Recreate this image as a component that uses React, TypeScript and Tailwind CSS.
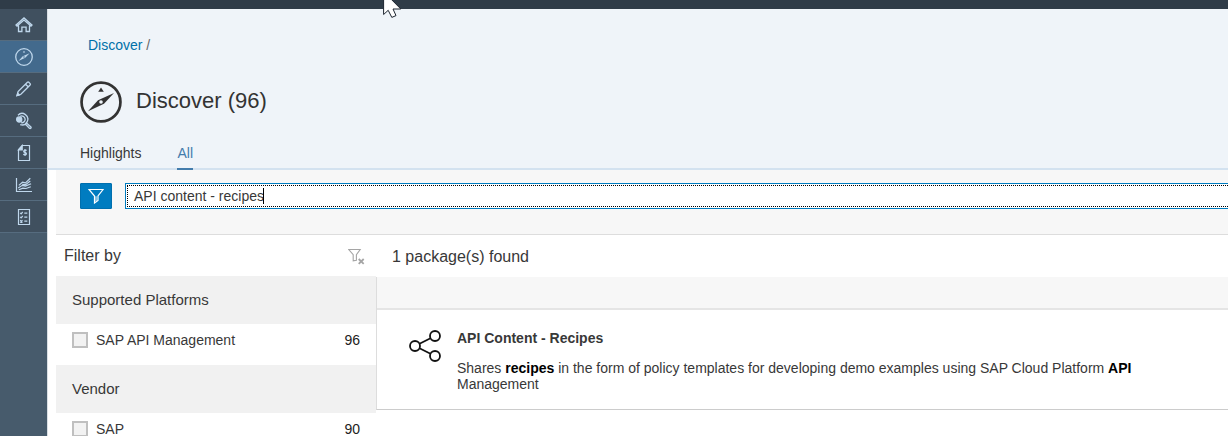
import type { ReactNode } from 'react';

function Compass({ size, stroke, hub }: { size: number; stroke: number; hub: string }) {
  return (
    <svg width={size} height={size} viewBox="0 0 42 42" fill="none" stroke="currentColor" className="shrink-0">
      <circle cx="21" cy="21" r={20.8 - stroke / 2} strokeWidth={stroke} />
      <path d="M34 12 24 22.8 8 30.2 18 19.3Z" fill="currentColor" stroke="none" />
      <path d="M21 6.5 23.8 10.7H18.2Z" fill="currentColor" stroke="none" />
      <circle cx="21" cy="21" r="1.8" fill={hub} stroke="none" />
    </svg>
  );
}

function Glyph({ children }: { children: ReactNode }) {
  return (
    <svg width="18" height="18" viewBox="0 0 18 18" fill="none" stroke="currentColor" strokeWidth="1.2">
      {children}
    </svg>
  );
}

const navItems: { name: string; icon: ReactNode; active?: boolean }[] = [
  {
    name: 'Home',
    icon: (
      <Glyph>
        <path d="M1 9 9 1.9 17 9l-1 1.1L9 4.1 2 10.1zM3.5 9.5v6h3.4v-4.3h4.2v4.3h3.4v-6" strokeWidth="1.3" />
      </Glyph>
    ),
  },
  { name: 'Discover', icon: <Compass size={18} stroke={3} hub="#436a8d" />, active: true },
  {
    name: 'Design',
    icon: (
      <Glyph>
        <path d="m2 15.6 1.1-4.1 9.3-9.2q.7-.6 1.4 0l1.3 1.3q.7.7 0 1.4l-9.2 9.3zM10.6 4.2l2.8 2.8" strokeWidth="1.3" />
        <path d="m2 15.6.7-2.4 1.7 1.7z" fill="currentColor" />
      </Glyph>
    ),
  },
  {
    name: 'Monitor',
    icon: (
      <Glyph>
        <circle cx="4.2" cy="7.5" r="2.6" fill="currentColor" />
        <path d="M3 3.2A5.7 5.7 0 1 1 5.2 12.6M5.2 4.3a3.4 3.4 0 1 1 1 6.4M11.5 11l4.4 3.9q.5.7-.1 1.3-.7.6-1.4 0L10.3 12" strokeWidth="1.3" />
      </Glyph>
    ),
  },
  {
    name: 'Billing',
    icon: (
      <Glyph>
        <path d="M7.2 1.5h7.3v15h-11V5.8z" />
        <path d="M7.2 1.5v4.3H3.5z" fill="currentColor" />
        <path d="M11.7 6.4c-3-1.2-4 1.4-1.9 2 2.7.6 1.9 3.3-1.6 2M10 5v7" />
      </Glyph>
    ),
  },
  {
    name: 'Analytics',
    icon: (
      <Glyph>
        <path d="M1.5 2v13.5H17M3.2 12.1l4.1-2.8 3.2.8 5.6-2.3M3.8 9.4l3.7-3.2 3 .7 4.8-4.6M3.8 13.8l4.1-1.6 3.1.3 4.8-1.7M7.4 8.4l3.2.3 4.7-3.7" />
      </Glyph>
    ),
  },
  {
    name: 'Tasks',
    icon: (
      <Glyph>
        <path d="M3.5 1.5h11v15h-11zM9.3 5.2h3M9.3 9.2h3M9.3 13.2h3M5.2 4.9l.9.9L7.7 4M5.2 8.9l.9.9 1.6-1.8M5.2 12.2l2.3 2.3M7.5 12.2l-2.3 2.3" />
      </Glyph>
    ),
  },
];

function Sidebar() {
  return (
    <nav className="flex w-12 shrink-0 flex-col border-r border-[#d9dfe4] bg-[#475b6c] text-[#bfd7ec]">
      {navItems.map((item) => (
        <a
          key={item.name}
          aria-label={item.name}
          className={
            item.active
              ? 'flex h-8 shrink-0 items-center justify-center border-b border-[#566c7f] bg-[#436a8d] pl-px'
              : 'flex h-8 shrink-0 items-center justify-center border-b border-[#566c7f] bg-[#40505f] pl-px'
          }
        >
          {item.icon}
        </a>
      ))}
    </nav>
  );
}

function FilterGroup({ title, label, count }: { title: string; label: string; count: number }) {
  return (
    <section>
      <h3 className="flex h-12 items-center bg-[#f1f1f1] px-4 text-[15px]">{title}</h3>
      <div className="flex h-[41px] items-start px-4 pt-2 text-sm leading-4">
        <span className="mr-2 size-4 border-2 border-[#bfbfbf] bg-[#f2f2f2]" />
        <span>{label}</span>
        <span className="ml-auto text-[#222]">{count}</span>
      </div>
    </section>
  );
}

export default function App() {
  return (
    <div className="flex h-[436px] w-[1228px] flex-col overflow-hidden bg-white font-['Liberation_Sans',Arial,sans-serif] text-[#383838]">
      <div className="h-[9px] shrink-0 bg-[#2f3c48]" />
      <div className="flex min-h-0 flex-1">
        <Sidebar />
        <main className="flex min-w-0 flex-1 flex-col">
          <header className="flex h-[161px] shrink-0 flex-col border-b-2 border-[#d3e2f0] bg-[#eff4f9] pl-8">
            <div className="mt-7 ml-2 text-sm leading-4 text-[#666]">
              <a className="text-[#0070a8]">Discover</a> /
            </div>
            <div className="mt-7 flex h-[42px] items-center text-[#333]">
              <Compass size={42} stroke={2.7} hub="#eff4f9" />
              <h1 className="-mt-0.5 ml-3.5 text-[22px] leading-6">Discover (96)</h1>
            </div>
            <div className="mt-auto -mb-0.5 flex gap-9 text-sm leading-4">
              <span className="h-[25px]">Highlights</span>
              <span className="h-[25px] border-b-2 border-[#427cac] text-[#427cac]">All</span>
            </div>
          </header>
          <div className="ml-2 flex h-[65px] shrink-0 items-start border-b border-[#ddd] bg-[#f7f7f7] pt-[13px] pl-6">
            <button aria-label="Filter" className="flex h-[26px] w-8 shrink-0 items-center justify-center rounded-[1px] border border-[#006fae] bg-[#007cc0] text-white">
              <svg width="16" height="16" viewBox="0 0 16 16" fill="none" stroke="currentColor" strokeWidth="1.2">
                <path d="M1 1.5h14L10 8v4.5L6.5 15V8z" />
                <path d="M8 8.3v5" strokeWidth="1.7" opacity=".6" />
              </svg>
            </button>
            <div className="ml-[13px] flex h-[26px] flex-1 border border-r-0 border-[#007cc0] bg-white pt-px pl-px">
              <div className="flex h-[22px] flex-1 items-center border border-r-0 border-dotted border-black pl-1.5 text-sm leading-4">
                API content - recipes
                <span className="-ml-px h-4 w-px bg-black" />
              </div>
            </div>
          </div>
          <div className="ml-2 flex min-h-0 flex-1">
            <aside className="w-80 shrink-0">
              <div className="flex h-[41px] items-center justify-between pr-[11px] pl-2 text-base">
                <h2>Filter by</h2>
                <svg width="17" height="17" viewBox="0 0 17 17" fill="none" stroke="#a5a5a5" strokeWidth="1.1" className="mt-0.5">
                  <path d="M.8 1.5h11.4L8.4 6.7v5.5L5.2 12.8V6.7z" />
                  <path d="m10.7 11 5 4.8m0-4.8-5 4.8" strokeWidth="1.8" />
                </svg>
              </div>
              <FilterGroup title="Supported Platforms" label="SAP API Management" count={96} />
              <FilterGroup title="Vendor" label="SAP" count={90} />
            </aside>
            <section className="flex flex-1 flex-col">
              <h2 className="flex h-[43px] shrink-0 items-center pl-4 text-base">1 package(s) found</h2>
              <div className="-mt-px h-[133px] border-b border-l border-[#ccc] border-l-[#ddd]">
                <div className="h-[33px] border-b-2 border-[#e5e5e5] bg-[#f7f7f7]" />
                <article className="flex pt-5 pl-8">
                  <svg width="32" height="32" viewBox="0 0 32 32" fill="none" stroke="#111" strokeWidth="1.8" className="shrink-0">
                    <circle cx="6" cy="16" r="5" />
                    <circle cx="26" cy="6" r="5" />
                    <circle cx="26" cy="26" r="5" />
                    <path d="M10.5 13.8 21.5 8.2M10.5 18.2l11 5.6" />
                  </svg>
                  <div className="ml-4 w-[690px] text-sm leading-4">
                    <h4 className="font-bold">API Content - Recipes</h4>
                    <p className="mt-3.5">
                      Shares <b className="text-black">recipes</b> in the form of policy templates for developing demo examples using SAP Cloud Platform <b className="text-black">API</b> Management
                    </p>
                  </div>
                </article>
              </div>
            </section>
          </div>
        </main>
      </div>
      <svg className="absolute top-0 left-[383px]" width="19" height="19" viewBox="0 0 19 19">
        <path d="M.6-8V14.5L5.2 10.3 8.8 17.4 13 15.6 10 9H17.8L1-8Z" fill="white" stroke="#1d2530" strokeWidth="1" />
      </svg>
    </div>
  );
}
